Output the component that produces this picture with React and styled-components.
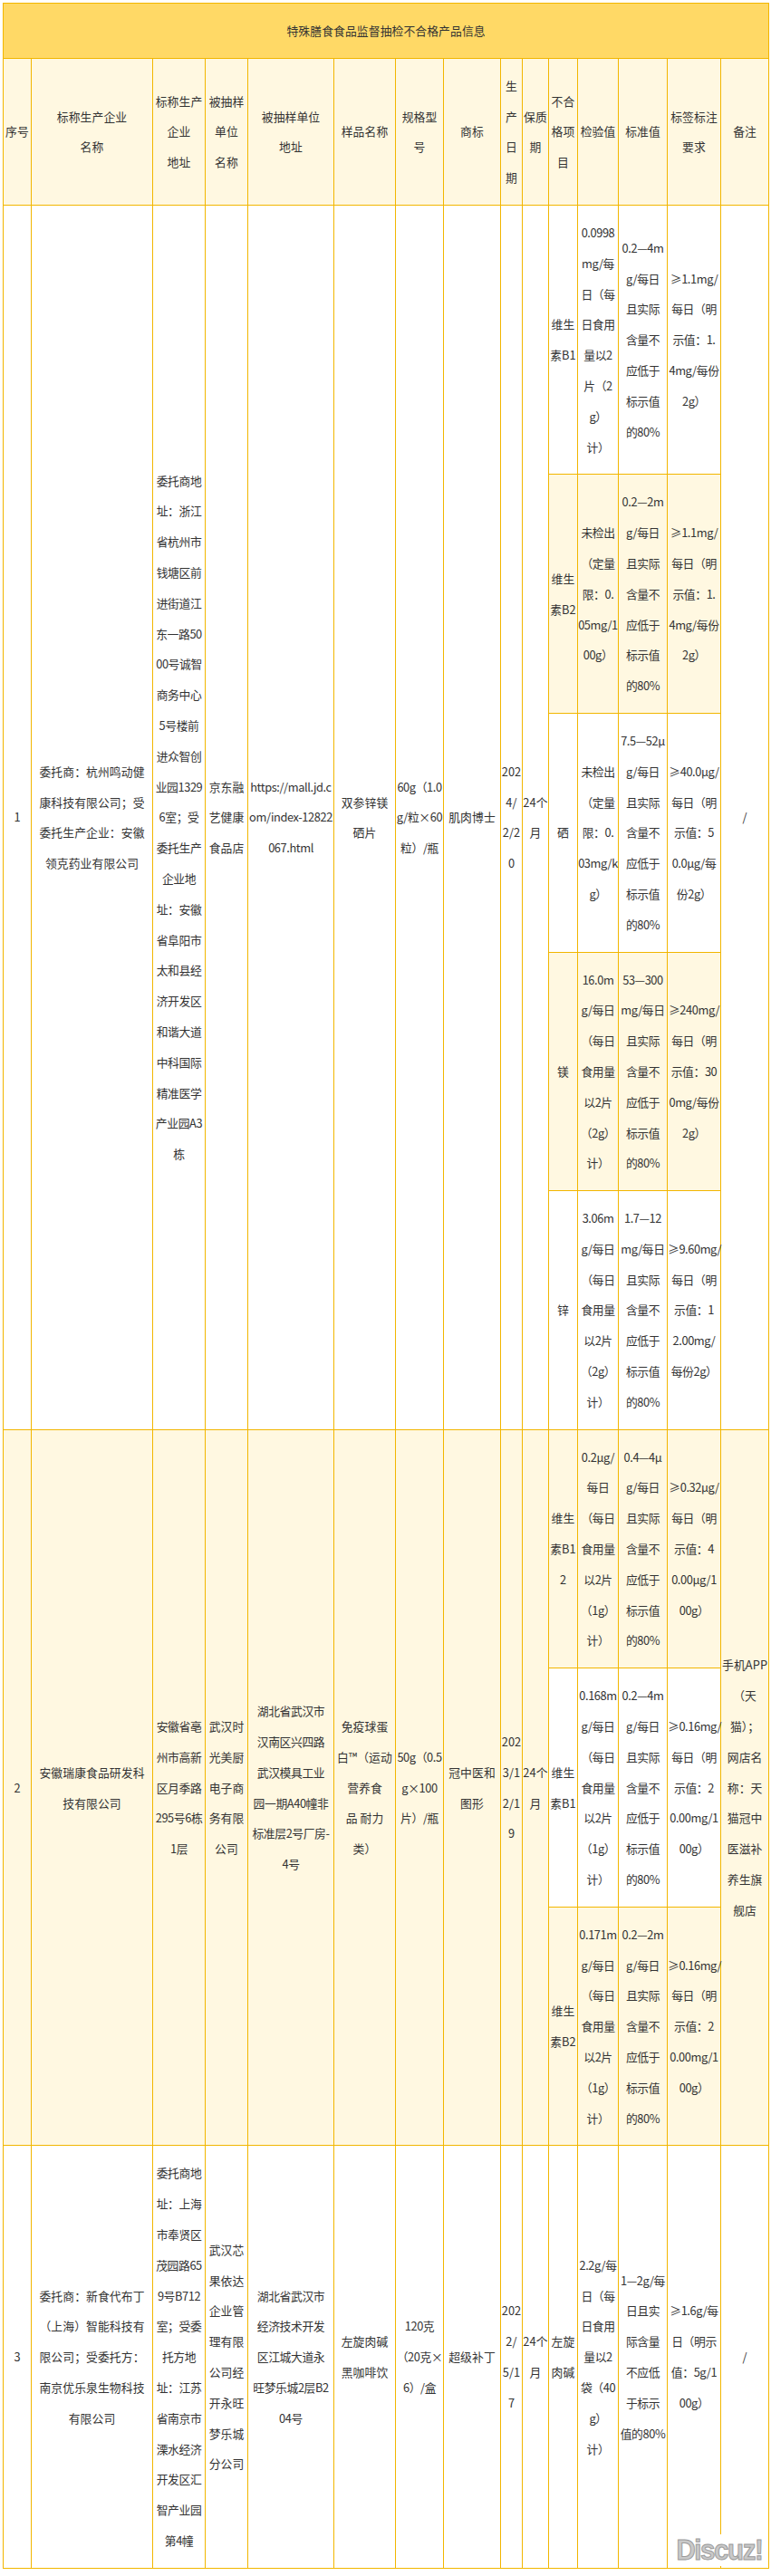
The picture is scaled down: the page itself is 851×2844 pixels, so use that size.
import React from "react";
import styled, { createGlobalStyle } from "styled-components";

const GlobalStyle = createGlobalStyle`
	body {
		margin: 0;
		background: #ffffff;
		font-family: "Noto Sans CJK SC", "Noto Sans", sans-serif;
		color: #333333;
	}
`;

const Page = styled.div`
	position: relative;
	padding: 3px 2px 4px 3px;
	width: 846px;
`;

const Table = styled.table`
	width: 846px;
	table-layout: fixed;
	border-collapse: collapse;
	font-size: 12.8px;
`;

const Cell = styled.td`
	border: 1px solid #f2b600;
	padding: 13px 0;
	line-height: 33.8px;
	text-align: center;
	vertical-align: middle;
	white-space: pre;
	letter-spacing: ${(p) => (p.$tight ? "-0.4px" : "0.1px")};
	color: #333333;
	background: ${(p) => (p.$tone === "cream" ? "#fff8e1" : "#ffffff")};
`;

const TitleCell = styled(Cell)`
	background: #ffd966;
`;

const Watermark = styled.div`
	position: absolute;
	right: 8px;
	bottom: 7px;
	padding: 0 2px;
	background: #ffffff;
	font-family: "Liberation Sans", sans-serif;
	font-weight: bold;
	font-size: 32px;
	line-height: 35px;
	letter-spacing: -1.5px;
	color: #c9c9c9;
	-webkit-text-stroke: 1px #9a9a9a;
	transform: scaleX(0.92);
	transform-origin: right center;
`;

const widths = [31, 134, 58, 47, 95, 68, 53, 63, 24, 29, 32, 45, 54, 59, 53];

const headers = [
	"序号",
	"标称生产企业\n名称",
	"标称生产\n企业\n地址",
	"被抽样\n单位\n名称",
	"被抽样单位\n地址",
	"样品名称",
	"规格型\n号",
	"商标",
	"生\n产\n日\n期",
	"保质\n期",
	"不合\n格项\n目",
	"检验值",
	"标准值",
	"标签标注\n要求",
	"备注",
];

const std80 = "且实际\n含量不\n应低于\n标示值\n的80%";

const products = [
	{
		no: "1",
		maker: "委托商：杭州鸣动健\n康科技有限公司；受\n委托生产企业：安徽\n领克药业有限公司",
		makerAddr:
			"委托商地\n址：浙江\n省杭州市\n钱塘区前\n进街道江\n东一路50\n00号诚智\n商务中心\n5号楼前\n进众智创\n业园1329\n6室；受\n委托生产\n企业地\n址：安徽\n省阜阳市\n太和县经\n济开发区\n和谐大道\n中科国际\n精准医学\n产业园A3\n栋",
		unit: "京东融\n艺健康\n食品店",
		unitAddr: "https://mall.jd.c\nom/index-12822\n067.html",
		name: "双参锌镁\n硒片",
		spec: "60g（1.0\ng/粒×60\n粒）/瓶",
		brand: "肌肉博士",
		date: "202\n4/\n2/2\n0",
		life: "24个\n月",
		remark: "/",
		items: [
			{
				item: "维生\n素B1",
				value: "0.0998\nmg/每\n日（每\n日食用\n量以2\n片（2\ng）\n计）",
				standard: "0.2—4m\ng/每日\n" + std80,
				label: "≥1.1mg/\n每日（明\n示值：1.\n4mg/每份\n2g）",
			},
			{
				item: "维生\n素B2",
				value: "未检出\n（定量\n限：0.\n05mg/1\n00g）",
				standard: "0.2—2m\ng/每日\n" + std80,
				label: "≥1.1mg/\n每日（明\n示值：1.\n4mg/每份\n2g）",
			},
			{
				item: "硒",
				value: "未检出\n（定量\n限：0.\n03mg/k\ng）",
				standard: "7.5—52μ\ng/每日\n" + std80,
				label: "≥40.0μg/\n每日（明\n示值：5\n0.0μg/每\n份2g）",
			},
			{
				item: "镁",
				value: "16.0m\ng/每日\n（每日\n食用量\n以2片\n（2g）\n计）",
				standard: "53—300\nmg/每日\n" + std80,
				label: "≥240mg/\n每日（明\n示值：30\n0mg/每份\n2g）",
			},
			{
				item: "锌",
				value: "3.06m\ng/每日\n（每日\n食用量\n以2片\n（2g）\n计）",
				standard: "1.7—12\nmg/每日\n" + std80,
				label: "≥9.60mg/\n每日（明\n示值：1\n2.00mg/\n每份2g）",
			},
		],
	},
	{
		no: "2",
		maker: "安徽瑞康食品研发科\n技有限公司",
		makerAddr: "安徽省亳\n州市高新\n区月季路\n295号6栋\n1层",
		unit: "武汉时\n光美厨\n电子商\n务有限\n公司",
		unitAddr: "湖北省武汉市\n汉南区兴四路\n武汉模具工业\n园一期A40幢非\n标准层2号厂房-\n4号",
		name: "免疫球蛋\n白™（运动\n营养食\n品 耐力\n类）",
		spec: "50g（0.5\ng×100\n片）/瓶",
		brand: "冠中医和\n图形",
		date: "202\n3/1\n2/1\n9",
		life: "24个\n月",
		remark: "手机APP\n（天\n猫）；\n网店名\n称：天\n猫冠中\n医滋补\n养生旗\n舰店",
		items: [
			{
				item: "维生\n素B1\n2",
				value: "0.2μg/\n每日\n（每日\n食用量\n以2片\n（1g）\n计）",
				standard: "0.4—4μ\ng/每日\n" + std80,
				label: "≥0.32μg/\n每日（明\n示值：4\n0.00μg/1\n00g）",
			},
			{
				item: "维生\n素B1",
				value: "0.168m\ng/每日\n（每日\n食用量\n以2片\n（1g）\n计）",
				standard: "0.2—4m\ng/每日\n" + std80,
				label: "≥0.16mg/\n每日（明\n示值：2\n0.00mg/1\n00g）",
			},
			{
				item: "维生\n素B2",
				value: "0.171m\ng/每日\n（每日\n食用量\n以2片\n（1g）\n计）",
				standard: "0.2—2m\ng/每日\n" + std80,
				label: "≥0.16mg/\n每日（明\n示值：2\n0.00mg/1\n00g）",
			},
		],
	},
	{
		no: "3",
		maker: "委托商：新食代布丁\n（上海）智能科技有\n限公司；受委托方：\n南京优乐泉生物科技\n有限公司",
		makerAddr:
			"委托商地\n址：上海\n市奉贤区\n茂园路65\n9号B712\n室；受委\n托方地\n址：江苏\n省南京市\n溧水经济\n开发区汇\n智产业园\n第4幢",
		unit: "武汉芯\n果依达\n企业管\n理有限\n公司经\n开永旺\n梦乐城\n分公司",
		unitAddr: "湖北省武汉市\n经济技术开发\n区江城大道永\n旺梦乐城2层B2\n04号",
		name: "左旋肉碱\n黑咖啡饮",
		spec: "120克\n（20克×\n6）/盒",
		brand: "超级补丁",
		date: "202\n2/\n5/1\n7",
		life: "24个\n月",
		remark: "/",
		items: [
			{
				item: "左旋\n肉碱",
				value: "2.2g/每\n日（每\n日食用\n量以2\n袋（40\ng）\n计）",
				standard: "1—2g/每\n日且实\n际含量\n不应低\n于标示\n值的80%",
				label: "≥1.6g/每\n日（明示\n值：5g/1\n00g）",
			},
		],
	},
];

const toneOf = (index) => (index % 2 === 0 ? "cream" : "white");

function ProductRows({ product, startIndex }) {
	const span = product.items.length;
	const mainTone = toneOf(startIndex);
	return product.items.map((it, i) => {
		const tone = toneOf(startIndex + i);
		return (
			<tr key={i}>
				{i === 0 && (
					<>
						<Cell rowSpan={span} $tone={mainTone}>{product.no}</Cell>
						<Cell rowSpan={span} $tone={mainTone}>{product.maker}</Cell>
						<Cell rowSpan={span} $tone={mainTone} $tight>{product.makerAddr}</Cell>
						<Cell rowSpan={span} $tone={mainTone}>{product.unit}</Cell>
						<Cell rowSpan={span} $tone={mainTone} $tight>{product.unitAddr}</Cell>
						<Cell rowSpan={span} $tone={mainTone}>{product.name}</Cell>
						<Cell rowSpan={span} $tone={mainTone} $tight>{product.spec}</Cell>
						<Cell rowSpan={span} $tone={mainTone}>{product.brand}</Cell>
						<Cell rowSpan={span} $tone={mainTone}>{product.date}</Cell>
						<Cell rowSpan={span} $tone={mainTone}>{product.life}</Cell>
					</>
				)}
				<Cell $tone={tone}>{it.item}</Cell>
				<Cell $tone={tone} $tight>{it.value}</Cell>
				<Cell $tone={tone} $tight>{it.standard}</Cell>
				<Cell $tone={tone} $tight>{it.label}</Cell>
				{i === 0 && (
					<Cell rowSpan={span} $tone={mainTone}>{product.remark}</Cell>
				)}
			</tr>
		);
	});
}

export default function App() {
	// tr 1 is the title, tr 2 the header; products start at tr 3
	let trIndex = 3;
	const starts = products.map((p) => {
		const s = trIndex;
		trIndex += p.items.length;
		return s;
	});

	return (
		<>
			<GlobalStyle />
			<Page>
				<Table>
					<colgroup>
						{widths.map((w, i) => (
							<col key={i} style={{ width: w }} />
						))}
					</colgroup>
					<tbody>
						<tr>
							<TitleCell colSpan={15}>特殊膳食食品监督抽检不合格产品信息</TitleCell>
						</tr>
						<tr>
							{headers.map((h, i) => (
								<Cell key={i} $tone="cream">{h}</Cell>
							))}
						</tr>
						{products.map((p, i) => (
							<ProductRows key={p.no} product={p} startIndex={starts[i]} />
						))}
					</tbody>
				</Table>
				<Watermark>Discuz!</Watermark>
			</Page>
		</>
	);
}
